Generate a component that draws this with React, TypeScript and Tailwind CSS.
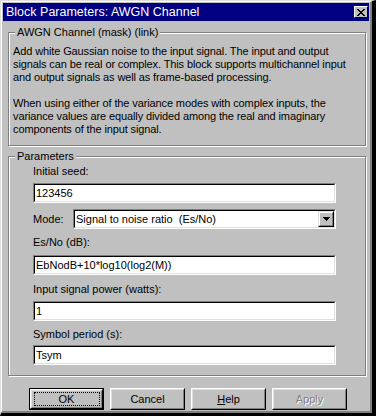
import type { ReactNode } from "react"

const Field = ({ value }: { value: string }) => (
  <div className="h-[20px] w-[303px] border border-t-[#808080] border-l-[#808080] border-b-white border-r-white">
    <div className="flex h-full items-center border border-t-black border-l-black border-b-[#dfdfdf] border-r-[#dfdfdf] bg-white pl-px whitespace-pre">
      {value}
    </div>
  </div>
)

const Button = ({ children, isDefault }: { children: ReactNode; isDefault?: boolean }) => (
  <div className={isDefault ? "h-[22px] w-[75px] border border-black" : "h-[22px] w-[75px]"}>
    <div className="h-full border border-t-white border-l-white border-b-black border-r-black">
      <div className="flex h-full items-center justify-center border border-t-[#dfdfdf] border-l-[#dfdfdf] border-b-[#808080] border-r-[#808080]">
        {isDefault ? (
          <div className="flex h-[14px] w-[66px] items-center justify-center border border-dotted border-black">
            {children}
          </div>
        ) : (
          children
        )}
      </div>
    </div>
  </div>
)

const CloseIcon = () => (
  <svg width="8" height="7" viewBox="0 0 8 7" shapeRendering="crispEdges">
    <rect x="0" y="0" width="2" height="1" />
    <rect x="6" y="0" width="2" height="1" />
    <rect x="1" y="1" width="2" height="1" />
    <rect x="5" y="1" width="2" height="1" />
    <rect x="2" y="2" width="4" height="1" />
    <rect x="3" y="3" width="2" height="1" />
    <rect x="2" y="4" width="4" height="1" />
    <rect x="1" y="5" width="2" height="1" />
    <rect x="5" y="5" width="2" height="1" />
    <rect x="0" y="6" width="2" height="1" />
    <rect x="6" y="6" width="2" height="1" />
  </svg>
)

export default function App() {
  return (
    <div className="h-[416px] w-[376px] overflow-hidden border-t border-l border-t-[#dfdfdf] border-l-[#dfdfdf] border-r-4 border-b-[3px] border-r-black border-b-black bg-[#c0c0c0] font-['Liberation_Sans',Arial,sans-serif] text-[11px] leading-[13px] text-black">
      <div className="flex h-full flex-col border-t border-l border-t-white border-l-white border-r-2 border-b-2 border-r-[#808080] border-b-[#808080] p-px">
        {/* Title bar */}
        <div className="flex h-[18px] shrink-0 items-center justify-between bg-[#000080] pl-[3px] pr-px text-[12.5px] text-white">
          <span>Block Parameters: AWGN Channel</span>
          <div className="flex h-[12px] w-[14px] items-center justify-center border border-t-white border-l-white border-b-black border-r-black bg-[#c0c0c0] text-black">
            <CloseIcon />
          </div>
        </div>

        {/* Description */}
        <fieldset className="mt-[5px] ml-[5px] mr-[3px] border border-[#808080] shadow-[inset_1px_1px_0_#fff,1px_1px_0_#fff]">
          <legend className="ml-[6px] bg-[#c0c0c0] px-[2px]">AWGN Channel (mask) (link)</legend>
          <p className="mt-[6px] mb-[9px] px-[4px] tracking-[-0.12px]">
            Add white Gaussian noise to the input signal. The input and output
            <br />
            signals can be real or complex. This block supports multichannel input
            <br />
            and output signals as well as frame-based processing.
            <br />
            <br />
            When using either of the variance modes with complex inputs, the
            <br />
            variance values are equally divided among the real and imaginary
            <br />
            components of the input signal.
          </p>
        </fieldset>

        {/* Parameters */}
        <fieldset className="mt-[4px] ml-[5px] mr-[3px] border border-[#808080] shadow-[inset_1px_1px_0_#fff,1px_1px_0_#fff]">
          <legend className="ml-[6px] bg-[#c0c0c0] px-[2px]">Parameters</legend>
          <div className="flex flex-col pl-[24px] pb-[10px]">
            <div className="mt-[2px]">Initial seed:</div>
            <div className="mt-[5px]">
              <Field value="123456" />
            </div>
            <div className="mt-[6px] flex h-[20px] items-center">
              <span className="w-[40px]">Mode:</span>
              <div className="h-[20px] w-[263px] border border-t-[#808080] border-l-[#808080] border-b-white border-r-white">
                <div className="flex h-full items-center justify-between border border-t-black border-l-black border-b-[#dfdfdf] border-r-[#dfdfdf] bg-white pl-px">
                  <span className="whitespace-pre">Signal to noise ratio  (Es/No)</span>
                  <div className="h-[16px] w-[16px] border border-t-[#dfdfdf] border-l-[#dfdfdf] border-b-black border-r-black bg-[#c0c0c0]">
                    <div className="flex h-full items-center justify-center border border-t-white border-l-white border-b-[#808080] border-r-[#808080]">
                      <svg width="7" height="4" viewBox="0 0 7 4" shapeRendering="crispEdges">
                        <rect x="0" y="0" width="7" height="1" />
                        <rect x="1" y="1" width="5" height="1" />
                        <rect x="2" y="2" width="3" height="1" />
                        <rect x="3" y="3" width="1" height="1" />
                      </svg>
                    </div>
                  </div>
                </div>
              </div>
            </div>
            <div className="mt-[7px]">Es/No (dB):</div>
            <div className="mt-[6px]">
              <Field value="EbNodB+10*log10(log2(M))" />
            </div>
            <div className="mt-[8px]">Input signal power (watts):</div>
            <div className="mt-[5px]">
              <Field value="1" />
            </div>
            <div className="mt-[7px]">Symbol period (s):</div>
            <div className="mt-[4px]">
              <Field value="Tsym" />
            </div>
          </div>
        </fieldset>

        {/* Buttons */}
        <div className="mt-[12px] flex gap-[6px] pl-[26px]">
          <Button isDefault>OK</Button>
          <Button>Cancel</Button>
          <Button>
            <span>
              <span className="underline">H</span>elp
            </span>
          </Button>
          <Button>
            <span className="text-[#808080] [text-shadow:1px_1px_0_#fff]">Apply</span>
          </Button>
        </div>
      </div>
    </div>
  )
}
